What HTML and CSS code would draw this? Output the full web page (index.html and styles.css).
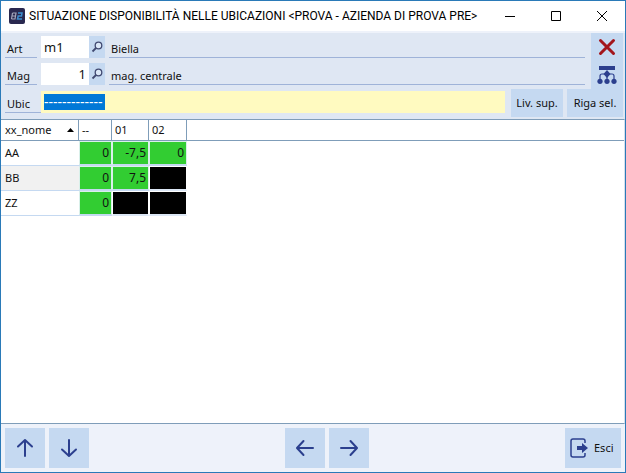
FILE: index.html
```html
<!DOCTYPE html>
<html lang="it">
<head>
<meta charset="utf-8">
<title>Situazione disponibilità nelle ubicazioni</title>
<link rel="stylesheet" href="styles.css">
</head>
<body>
<svg class="defs" aria-hidden="true">
  <symbol id="lens" viewBox="0 0 16 22">
    <circle cx="9.500" cy="9.500" r="3.300" fill="#dbe8f8" stroke="#414a72" stroke-width="1.300"/>
    <path d="M7 12 3.500 15.500" stroke="#414a72" stroke-width="1.800" fill="none"/>
  </symbol>
  <symbol id="arrow" viewBox="0 0 40 40">
    <path d="M20 28V12.500M13 18.500 20 12 27 18.500" fill="none" stroke="#2b3f8e" stroke-width="2" stroke-linecap="round" stroke-linejoin="round"/>
  </symbol>
</svg>
<main class="window">
  <header class="titlebar">
    <svg class="logo" viewBox="0 0 16 16" aria-hidden="true">
      <rect width="16" height="16" rx="2" fill="#29284f"/>
      <path d="M3.500 5H7L6.500 8H3.500M6.500 8 6 11H2.500M3.500 5 2.500 11" fill="none" stroke="#a5a8bd" stroke-width="1.200"/>
      <path d="M9 5h4l-.500 3H9.200l-.700 3H13" fill="none" stroke="#3d8ed0" stroke-width="1.500"/>
    </svg>
    <h1 class="title">SITUAZIONE DISPONIBILITÀ NELLE UBICAZIONI &lt;PROVA - AZIENDA DI PROVA PRE&gt;</h1>
    <div class="controls">
      <button class="control" type="button" aria-label="Riduci a icona"><svg viewBox="0 0 12 12"><path d="M1 6.500h10"/></svg></button>
      <button class="control" type="button" aria-label="Ingrandisci"><svg viewBox="0 0 12 12"><path d="M1.500 1.500h9v9h-9z"/></svg></button>
      <button class="control" type="button" aria-label="Chiudi"><svg viewBox="0 0 12 12"><path d="M1 1l10 10M11 1 1 11"/></svg></button>
    </div>
  </header>

  <form class="filters">
    <div class="upper">
      <div class="fields">
        <div class="row">
          <label class="label" for="art">Art</label>
          <input class="input code" id="art" type="text" value="m1">
          <button class="lookup" type="button" aria-label="Cerca articolo"><svg><use href="#lens"/></svg></button>
          <output class="description" for="art">Biella</output>
        </div>
        <div class="row">
          <label class="label" for="mag">Mag</label>
          <input class="input code number" id="mag" type="text" value="1">
          <button class="lookup" type="button" aria-label="Cerca magazzino"><svg><use href="#lens"/></svg></button>
          <output class="description" for="mag">mag. centrale</output>
        </div>
      </div>
      <div class="tools">
        <button class="tool" type="button" aria-label="Annulla"><svg viewBox="0 0 32 28"><path d="M9.500 7.500 22.500 20.500M22.500 7.500 9.500 20.500" stroke="#a3151c" stroke-width="3" stroke-linecap="round"/></svg></button>
        <button class="tool" type="button" aria-label="Struttura"><svg viewBox="0 0 32 28"><g fill="#2b3f8e"><path d="M8 5h16v4H8zM16 9l3.500 4L16 17l-3.500-4z"/><circle cx="9" cy="20.300" r="2.600"/><circle cx="16" cy="20.300" r="2.600"/><circle cx="23" cy="20.300" r="2.600"/></g><path d="M9 19v-4q0-2 2-2h10q2 0 2 2v4M16 13v6" fill="none" stroke="#2b3f8e" stroke-width="1.200"/></svg></button>
      </div>
    </div>
    <div class="row location">
      <label class="label" for="ubic">Ubic</label>
      <div class="input ubic"><input id="ubic" type="text" value="-------------"></div>
      <button class="action" type="button">Liv. sup.</button>
      <button class="action wide" type="button">Riga sel.</button>
    </div>
  </form>

  <section class="grid">
    <table>
      <thead>
        <tr><th class="name"><span class="sort">xx_nome <svg viewBox="0 0 7 4" aria-hidden="true"><path d="M3.500 0 7 4H0z"/></svg></span></th><th class="narrow">--</th><th class="qty">01</th><th class="qty last">02</th><th class="rest"></th></tr>
      </thead>
      <tbody>
        <tr><td>AA</td><td class="ok">0</td><td class="ok">-7,5</td><td class="ok">0</td></tr>
        <tr><td class="alt">BB</td><td class="ok">0</td><td class="ok">7,5</td><td class="none"></td></tr>
        <tr><td>ZZ</td><td class="ok">0</td><td class="none"></td><td class="none"></td></tr>
      </tbody>
    </table>
  </section>

  <footer class="footer">
    <div class="group">
      <button class="nav" type="button" aria-label="Su"><svg><use href="#arrow"/></svg></button>
      <button class="nav" type="button" aria-label="Giù"><svg class="down"><use href="#arrow"/></svg></button>
    </div>
    <div class="group">
      <button class="nav" type="button" aria-label="Precedente"><svg class="left"><use href="#arrow"/></svg></button>
      <button class="nav" type="button" aria-label="Successivo"><svg class="right"><use href="#arrow"/></svg></button>
    </div>
    <button class="exit" type="button"><svg viewBox="0 0 18 20" aria-hidden="true"><path d="M15 5V3q0-2-2-2H3Q1 1 1 3v14q0 2 2 2h10q2 0 2-2v-2" fill="none" stroke="#2b3f8e" stroke-width="1.500"/><path d="M7 8h5V5l6 5-6 5v-3H7z" fill="#2b3f8e"/></svg>Esci</button>
  </footer>
</main>
</body>
</html>
```
FILE: styles.css
```css
* {
  box-sizing: border-box;
}

body {
  margin: 0;
  font: 11px/16px "Noto Sans", sans-serif;
  color: #111;
}

button,
input {
  margin: 0;
  padding: 0;
  border: 0;
  border-radius: 0;
  outline: 0;
  font: inherit;
  color: inherit;
}

button {
  background: #c5d9f1;
}

svg {
  display: block;
}

.defs {
  position: absolute;
  width: 0;
  height: 0;
}

.window {
  display: flex;
  flex-direction: column;
  min-height: 100vh;
  border: 1px solid #2a7ab8;
  background: #eef2fa;
}

.titlebar {
  display: flex;
  align-items: center;
  height: 30px;
  padding-left: 8px;
  background: #fff;
}

.logo {
  flex: none;
  width: 16px;
  height: 16px;
}

.title {
  flex: 1;
  min-width: 0;
  margin: 0 0 0 4px;
  font: 12px/16px Roboto, sans-serif;
  color: #000;
  white-space: nowrap;
}

.controls {
  display: flex;
}

.control {
  display: grid;
  place-items: center;
  width: 46px;
  height: 30px;
  background: none;
}

.control svg {
  width: 12px;
  height: 12px;
  fill: none;
  stroke: #000;
}

.filters {
  margin-top: 2px;
  padding: 0 2px 2px 4px;
  background: #dfe7f3;
}

.upper {
  display: flex;
}

.fields {
  display: flex;
  flex: 1;
  flex-direction: column;
  gap: 5px;
  padding: 3px 6px 0 0;
}

.row {
  display: flex;
  align-items: flex-start;
}

.label {
  width: 32px;
  height: 22px;
  margin-right: 4px;
  padding: 5px 0 0 2px;
  border-bottom: 1px solid #9fb3d8;
}

.description {
  flex: 1;
  height: 22px;
  margin-left: 4px;
  padding: 5px 0 0 2px;
  border-bottom: 1px solid #9fb3d8;
}

.input {
  height: 22px;
  background: #fff;
}

.code {
  width: 48px;
  padding: 0 3px;
  font-size: 13px;
}

.number {
  text-align: right;
}

.lookup,
.lookup svg {
  width: 16px;
  height: 22px;
}

.tools {
  width: 32px;
}

.tool,
.tool svg {
  display: block;
  width: 32px;
  height: 28px;
}

.location .label {
  width: 36px;
  margin: 2px 0 0;
}

.ubic {
  flex: 1;
  margin: 2px 6px 0 0;
  padding: 3px;
  background: #fffac0;
}

.ubic input {
  display: block;
  width: 61px;
  height: 16px;
  background: #0078d7;
  color: #fff;
  font-size: 14px;
}

.action {
  width: 52px;
  height: 28px;
}

.wide {
  width: 56px;
  margin-left: 4px;
}

.grid {
  flex: 1;
  border: 1px solid #7f9db9;
  border-right-color: #d5dfec;
  border-left: 0;
  background: #fff;
}

table {
  width: 100%;
  border-collapse: separate;
  border-spacing: 0;
  table-layout: fixed;
}

th {
  height: 21px;
  padding: 0 4px;
  border-right: 1px solid #7f9db9;
  border-bottom: 1px solid #7f9db9;
  font-weight: normal;
  text-align: left;
}

.name {
  width: 78px;
}

.narrow {
  width: 33px;
}

.qty {
  width: 37px;
}

.last {
  width: 38px;
}

th.narrow,
th.qty {
  padding-left: 3px;
}

th.rest {
  border-right: 0;
}

.sort {
  display: flex;
  align-items: center;
  justify-content: space-between;
}

.sort svg {
  width: 7px;
  height: 4px;
}

td {
  height: 25px;
  padding: 0 4px;
  border-bottom: 1px solid #c5d9f1;
}

.alt {
  background: #f1f1f1;
}

td.ok,
td.none {
  padding: 0 2px;
  border: 1px solid #d9f0ea;
  border-bottom: 2px solid #c5d9f1;
  background: #32cd32;
  font-size: 12px;
  text-align: right;
}

td.none {
  border-color: #fff;
  border-bottom-color: #dce7f5;
  background: #000;
}

.footer {
  display: flex;
  justify-content: space-between;
  padding: 4px;
}

.group {
  display: flex;
  gap: 4px;
}

.nav,
.nav svg {
  width: 40px;
  height: 40px;
}

.down {
  transform: rotate(180deg);
}

.left {
  transform: rotate(-90deg);
}

.right {
  transform: rotate(90deg);
}

.exit {
  display: flex;
  align-items: center;
  gap: 6px;
  width: 56px;
  height: 40px;
  padding-left: 5px;
}

.exit svg {
  flex: none;
  width: 18px;
  height: 20px;
}
```
